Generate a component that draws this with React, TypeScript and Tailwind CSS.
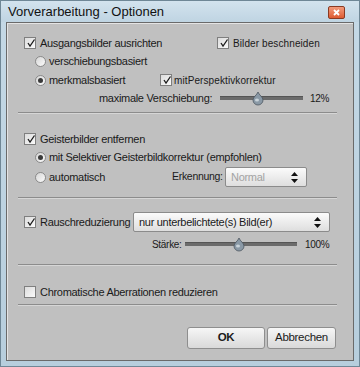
import React from 'react';

const font = { fontFamily: '"Liberation Sans", Arial, sans-serif' };

const Check = ({ checked }: { checked: boolean }) => (
  <span className="relative inline-block w-[12px] h-[12px] shrink-0 border border-[#7f7f7f] bg-gradient-to-br from-[#dcdcdc] to-[#fafafa]">
    {checked && (
      <svg className="absolute left-[1px] top-[0px]" width="10" height="10" viewBox="0 0 10 10">
        <path d="M2 5 L4 8 L8.5 1.5" fill="none" stroke="#1a1a1a" strokeWidth="1.3" />
      </svg>
    )}
  </span>
);

const Radio = ({ checked }: { checked: boolean }) => (
  <span className="flex items-center justify-center w-[11px] h-[11px] shrink-0 rounded-full border border-[#8a8a8a] bg-gradient-to-br from-[#d6d6d6] to-[#fbfbfb]">
    {checked && <span className="w-[5px] h-[5px] rounded-full bg-[#3a3a3a]" />}
  </span>
);

const Slider = ({ width, pos }: { width: number; pos: number }) => (
  <svg width={width} height="16" viewBox={`0 0 ${width} 16`} className="shrink-0">
    <rect x="0" y="6" width={width} height="4" fill="#6b6b6b" />
    <rect x="0" y="6" width={width} height="1" fill="#555" />
    <path
      d={`M${pos} 2 C${pos + 1} 5 ${pos + 5} 7 ${pos + 5} 10 A5 5 0 0 1 ${pos - 5} 10 C${pos - 5} 7 ${pos - 1} 5 ${pos} 2 Z`}
      fill="#8a99a6"
      stroke="#4b5560"
      strokeWidth="0.8"
    />
    <ellipse cx={pos - 1} cy="10" rx="2" ry="1.6" fill="#c9d3da" />
  </svg>
);

const Arrows = () => (
  <svg width="7" height="11" viewBox="0 0 7 11">
    <path d="M3.5 0 L7 4 L0 4 Z" fill="#111" />
    <path d="M3.5 11 L7 7 L0 7 Z" fill="#111" />
  </svg>
);

const Select = ({ text, width, disabled }: { text: string; width: number; disabled?: boolean }) => (
  <div
    className="flex items-center justify-between h-[20px] pl-[5px] pr-[8px] rounded-[2px] border border-[#8b8b8b] bg-gradient-to-b from-[#fbfbfb] to-[#dedede] shrink-0"
    style={{ width }}
  >
    <span className={`text-[11px] ${disabled ? 'text-[#a3a3a3]' : 'text-[#1a1a1a]'}`}>{text}</span>
    <Arrows />
  </div>
);

const Sep = () => <div className="ml-[11px] mr-[16px] border-t border-[#8c8c8c] border-b border-b-[#d6d6d6]" />;

export default function App() {
  return (
    <div
      className="w-[360px] h-[367px] flex flex-col bg-gradient-to-b from-[#c5d9e6] to-[#b7cedd] border border-[#6f8796] text-[#1a1a1a] whitespace-nowrap"
      style={font}
    >
      <div className="flex items-center justify-between h-[21px] pl-[7px] pr-[14px] bg-gradient-to-b from-[#d3e3ee] to-[#bfd4e2]">
        <span className="text-[13px] text-[#111]">Vorverarbeitung - Optionen</span>
        <span className="flex items-center justify-center w-[17px] h-[13px] mt-[2px] rounded-[2px] border border-[#8a3a22] bg-gradient-to-b from-[#f29a7a] to-[#dd5a30]">
          <svg width="7" height="7" viewBox="0 0 7 7">
            <path d="M1 1 L6 6 M6 1 L1 6" stroke="#fff" strokeWidth="1.8" />
          </svg>
        </span>
      </div>

      <div className="flex-1 mx-[5px] mb-[5px] border border-[#6a6a6a] bg-[#c0c0c0] shadow-[inset_1px_1px_0_#e4e4e4] text-[11px] tracking-[-0.3px]">
        <div className="pl-[17px] pt-[14px]">
          <div className="flex items-center h-[12px]">
            <div className="flex items-center gap-[4px] w-[193px]">
              <Check checked />
              <span>Ausgangsbilder ausrichten</span>
            </div>
            <div className="flex items-center gap-[4px]">
              <Check checked />
              <span className="text-[10px] tracking-[0.1px]">Bilder beschneiden</span>
            </div>
          </div>
          <div className="flex items-center gap-[3px] ml-[11px] mt-[7px] h-[11px]">
            <Radio checked={false} />
            <span>verschiebungsbasiert</span>
          </div>
          <div className="flex items-center ml-[11px] mt-[7px] h-[12px]">
            <div className="flex items-center gap-[3px] w-[125px]">
              <Radio checked />
              <span>merkmalsbasiert</span>
            </div>
            <div className="flex items-center gap-[2px]">
              <Check checked />
              <span className="text-[10px] tracking-[0.1px]">mitPerspektivkorrektur</span>
            </div>
          </div>
          <div className="flex items-center mt-[4px] h-[16px] ml-[75px]">
            <span className="w-[121px]">maximale Verschiebung:</span>
            <Slider width={83} pos={38} />
            <span className="ml-[7px] text-[10px]">12%</span>
          </div>
        </div>

        <div className="mt-[6px]">
          <Sep />
        </div>

        <div className="pl-[17px] pt-[19px]">
          <div className="flex items-center gap-[4px] h-[12px]">
            <Check checked />
            <span>Geisterbilder entfernen</span>
          </div>
          <div className="flex items-center gap-[3px] ml-[11px] mt-[7px] h-[11px]">
            <Radio checked />
            <span>mit Selektiver Geisterbildkorrektur (empfohlen)</span>
          </div>
          <div className="flex items-center ml-[11px] mt-[4px] h-[20px]">
            <div className="flex items-center gap-[3px] w-[137px]">
              <Radio checked={false} />
              <span>automatisch</span>
            </div>
            <span className="text-[10.5px] w-[53px]">Erkennung:</span>
            <Select text="Normal" width={82} disabled />
          </div>
        </div>

        <div className="mt-[10px]">
          <Sep />
        </div>

        <div className="pl-[17px] pt-[13px]">
          <div className="flex items-center h-[20px]">
            <div className="flex items-center gap-[4px] w-[109px]">
              <Check checked />
              <span>Rauschreduzierung</span>
            </div>
            <Select text="nur unterbelichtete(s) Bild(er)" width={197} />
          </div>
          <div className="flex items-center mt-[4px] h-[16px] ml-[128px]">
            <span className="text-[10px] w-[33px]">Stärke:</span>
            <Slider width={112} pos={54} />
            <span className="ml-[8px] text-[10px]">100%</span>
          </div>
        </div>

        <div className="mt-[12px]">
          <Sep />
        </div>

        <div className="pl-[17px] pt-[20px]">
          <div className="flex items-center gap-[4px] h-[12px]">
            <Check checked={false} />
            <span>Chromatische Aberrationen reduzieren</span>
          </div>
        </div>

        <div className="mt-[6px]">
          <Sep />
        </div>

        <div className="flex justify-end gap-[2px] pr-[17px] pt-[21px]">
          <button className="w-[78px] h-[22px] rounded-[3px] border border-[#8e8e8e] bg-gradient-to-b from-[#f6f6f6] to-[#d9d9d9] text-[11.5px] font-bold">
            OK
          </button>
          <button className="w-[69px] h-[22px] rounded-[3px] border border-[#8e8e8e] bg-gradient-to-b from-[#f6f6f6] to-[#d9d9d9] text-[11.5px]">
            Abbrechen
          </button>
        </div>
      </div>
    </div>
  );
}
